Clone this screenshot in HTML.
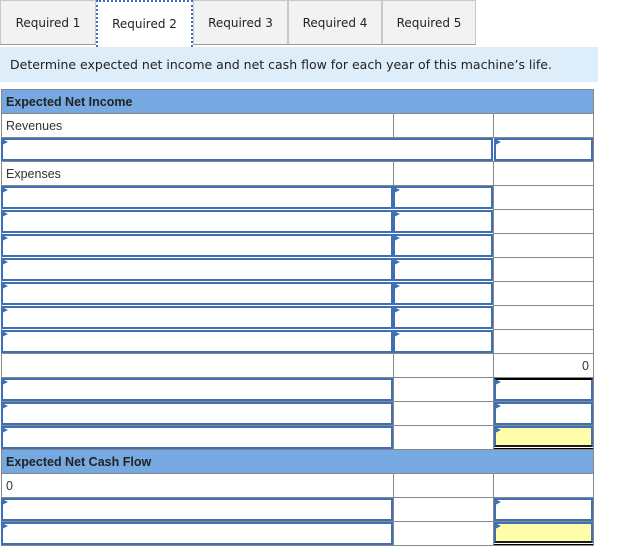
<!DOCTYPE html>
<html><head><style>
body{margin:0;width:627px;height:552px;background:#fff;font-family:Verdana,"DejaVu Sans",sans-serif;position:relative;overflow:hidden}
.t{position:absolute;top:0;height:45px;background:#f2f2f2;border:1px solid #c8c8c8;border-bottom:1px solid #999;font-size:12px;color:#222;text-align:center;line-height:45px;box-sizing:border-box}
.a{background:#fff;border:2px dotted #3b6fc0;border-bottom:none;height:47px}
.bar{position:absolute;left:0;top:47px;width:598px;height:35px;background:#ddedf9;font-size:12.5px;line-height:36px;padding-left:10px;box-sizing:border-box;color:#222}
.c{position:absolute;box-sizing:border-box;border:1px solid #888;background:#fff;font-family:"Liberation Sans",Arial,sans-serif;font-size:12.5px;color:#333;padding:5px 4px 0}
.h{background:#76a9e1;font-weight:bold;color:#222;font-size:12.5px;padding:5px 4px 0}
.i{position:absolute;box-sizing:border-box;border:2px solid #3f70b6;background:#fff}
.i::before{content:"";position:absolute;left:-1px;top:-1px;border-left:6px solid #3f70b6;border-top:3px solid transparent;border-bottom:3px solid transparent}
.y{background:#fefeaa;border-bottom:2px solid #1a1a1a;box-shadow:0 1px 0 0 #fff,0 2px 0 0 #000}
</style></head><body>
<div class="t" style="left:0;width:96px">Required 1</div>
<div class="t a" style="left:96px;width:97px">Required 2</div>
<div class="t" style="left:193px;width:95px">Required 3</div>
<div class="t" style="left:288px;width:94px">Required 4</div>
<div class="t" style="left:382px;width:94px">Required 5</div>
<div class="bar">Determine expected net income and net cash flow for each year of this machine’s life.</div>

<div class="c h" style="left:1px;top:89px;width:593px;height:25px">Expected Net Income</div>

<div class="c" style="left:1px;top:113px;width:393px;height:25px">Revenues</div>
<div class="c" style="left:393px;top:113px;width:101px;height:25px"></div>
<div class="c" style="left:493px;top:113px;width:101px;height:25px"></div>
<div class="c" style="left:1px;top:137px;width:593px;height:25px"></div>
<div class="i" style="left:1px;top:138px;width:492px;height:23px"></div>
<div class="i" style="left:494px;top:138px;width:99px;height:23px"></div>

<div class="c" style="left:1px;top:161px;width:393px;height:25px">Expenses</div>
<div class="c" style="left:393px;top:161px;width:101px;height:25px"></div>
<div class="c" style="left:493px;top:161px;width:101px;height:25px"></div>

<div class="c" style="left:1px;top:185px;width:593px;height:169px"></div>
<div class="c" style="left:493px;top:185px;width:101px;height:25px"></div>
<div class="c" style="left:493px;top:209px;width:101px;height:25px"></div>
<div class="c" style="left:493px;top:233px;width:101px;height:25px"></div>
<div class="c" style="left:493px;top:257px;width:101px;height:25px"></div>
<div class="c" style="left:493px;top:281px;width:101px;height:25px"></div>
<div class="c" style="left:493px;top:305px;width:101px;height:25px"></div>
<div class="c" style="left:493px;top:329px;width:101px;height:25px"></div>
<div class="i" style="left:1px;top:186px;width:392px;height:23px"></div><div class="i" style="left:393px;top:186px;width:100px;height:23px"></div>
<div class="i" style="left:1px;top:210px;width:392px;height:23px"></div><div class="i" style="left:393px;top:210px;width:100px;height:23px"></div>
<div class="i" style="left:1px;top:234px;width:392px;height:23px"></div><div class="i" style="left:393px;top:234px;width:100px;height:23px"></div>
<div class="i" style="left:1px;top:258px;width:392px;height:23px"></div><div class="i" style="left:393px;top:258px;width:100px;height:23px"></div>
<div class="i" style="left:1px;top:282px;width:392px;height:23px"></div><div class="i" style="left:393px;top:282px;width:100px;height:23px"></div>
<div class="i" style="left:1px;top:306px;width:392px;height:23px"></div><div class="i" style="left:393px;top:306px;width:100px;height:23px"></div>
<div class="i" style="left:1px;top:330px;width:392px;height:23px"></div><div class="i" style="left:393px;top:330px;width:100px;height:23px"></div>

<div class="c" style="left:1px;top:353px;width:393px;height:25px"></div>
<div class="c" style="left:393px;top:353px;width:101px;height:25px"></div>
<div class="c" style="left:493px;top:353px;width:101px;height:25px;text-align:right">0</div>

<div class="c" style="left:1px;top:377px;width:393px;height:25px"></div>
<div class="c" style="left:393px;top:377px;width:101px;height:25px"></div>
<div class="c" style="left:493px;top:377px;width:101px;height:25px"></div>
<div class="c" style="left:1px;top:401px;width:393px;height:25px"></div>
<div class="c" style="left:393px;top:401px;width:101px;height:25px"></div>
<div class="c" style="left:493px;top:401px;width:101px;height:25px"></div>
<div class="c" style="left:1px;top:425px;width:393px;height:25px"></div>
<div class="c" style="left:393px;top:425px;width:101px;height:25px"></div>
<div class="c" style="left:493px;top:425px;width:101px;height:25px"></div>
<div class="i" style="left:1px;top:378px;width:392px;height:23px"></div>
<div class="i" style="left:494px;top:378px;width:99px;height:23px;border-top-color:#000"></div>
<div class="i" style="left:1px;top:402px;width:392px;height:23px"></div>
<div class="i" style="left:494px;top:402px;width:99px;height:23px"></div>
<div class="i" style="left:1px;top:426px;width:392px;height:23px"></div>
<div class="i y" style="left:494px;top:426px;width:99px;height:21px"></div>

<div class="c h" style="left:1px;top:449px;width:593px;height:25px">Expected Net Cash Flow</div>

<div class="c" style="left:1px;top:473px;width:393px;height:25px">0</div>
<div class="c" style="left:393px;top:473px;width:101px;height:25px"></div>
<div class="c" style="left:493px;top:473px;width:101px;height:25px"></div>
<div class="c" style="left:1px;top:497px;width:393px;height:25px"></div>
<div class="c" style="left:393px;top:497px;width:101px;height:25px"></div>
<div class="c" style="left:493px;top:497px;width:101px;height:25px"></div>
<div class="c" style="left:1px;top:521px;width:393px;height:25px"></div>
<div class="c" style="left:393px;top:521px;width:101px;height:25px"></div>
<div class="c" style="left:493px;top:521px;width:101px;height:25px"></div>
<div class="i" style="left:1px;top:498px;width:392px;height:23px"></div>
<div class="i" style="left:494px;top:498px;width:99px;height:23px"></div>
<div class="i" style="left:1px;top:522px;width:392px;height:23px"></div>
<div class="i y" style="left:494px;top:522px;width:99px;height:21px"></div>
</body></html>
